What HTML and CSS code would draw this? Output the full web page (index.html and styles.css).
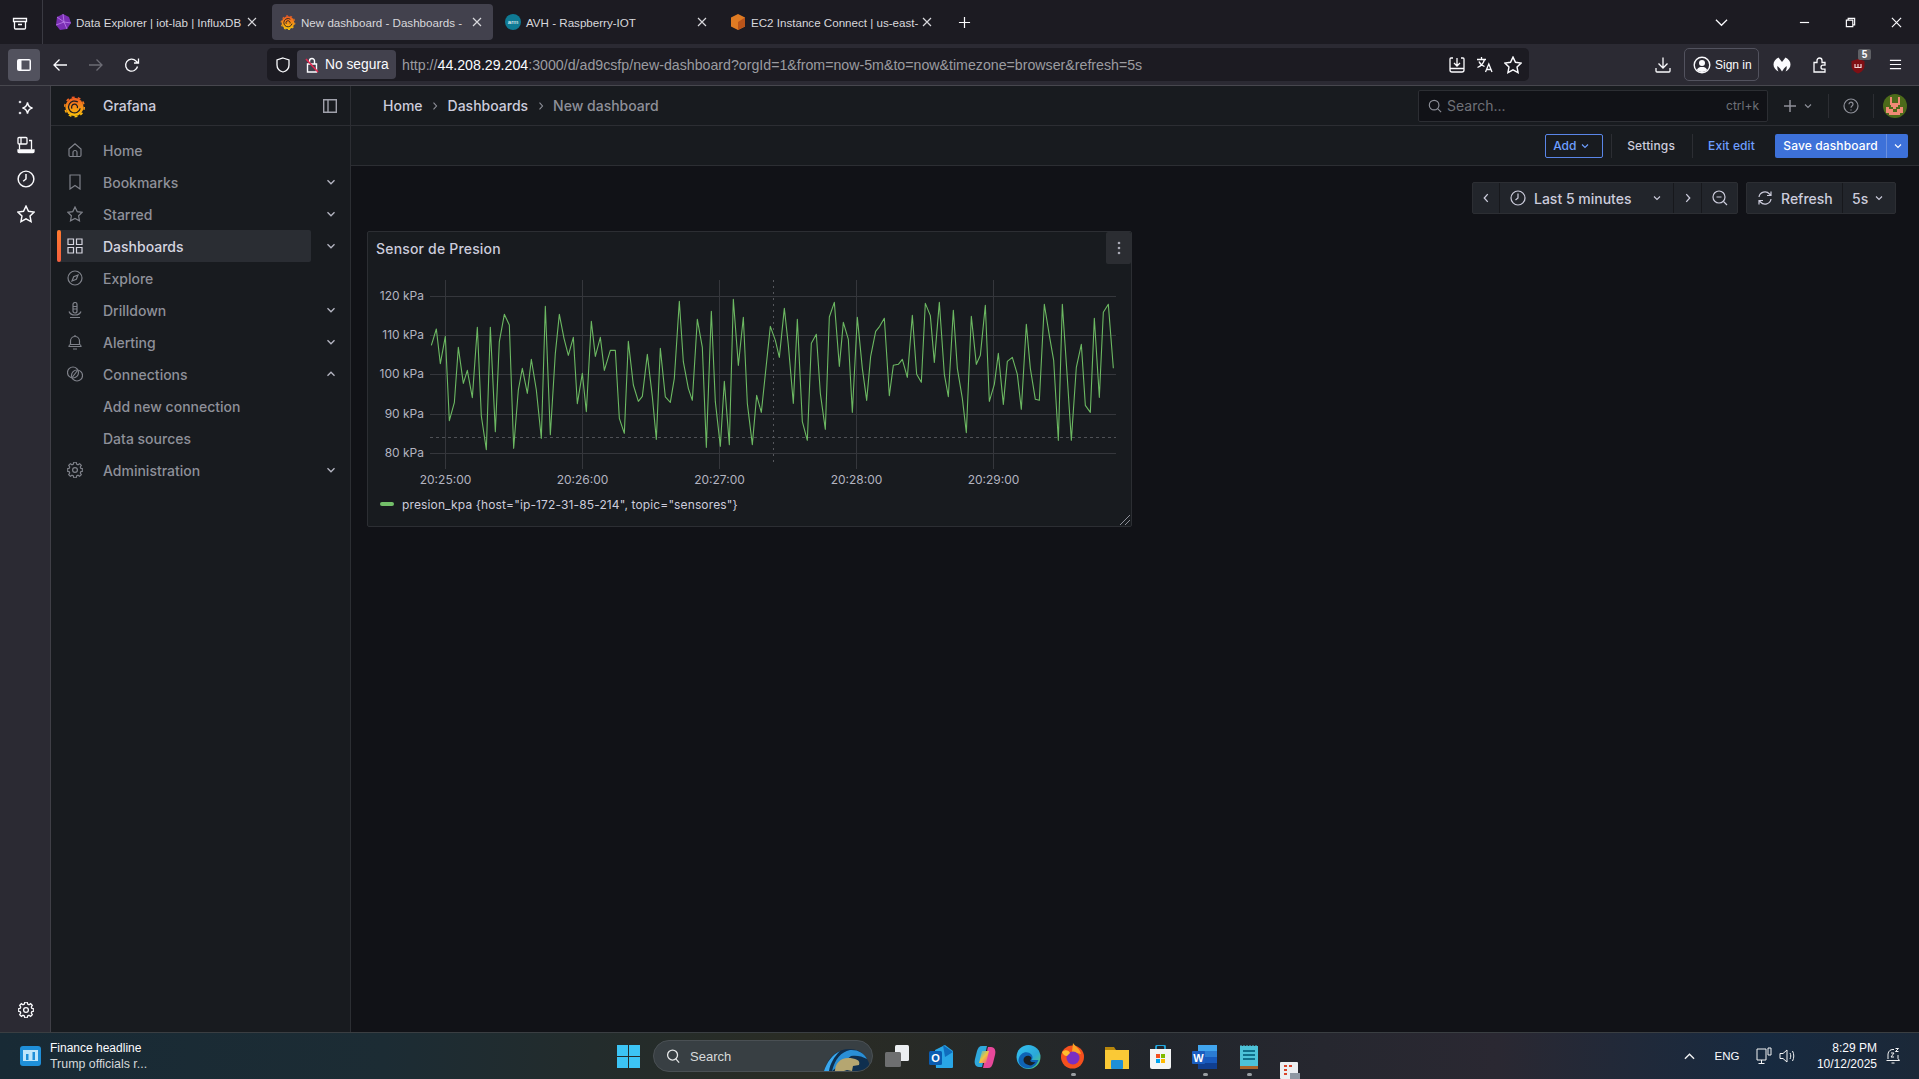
FILE: index.html
```html
<!DOCTYPE html>
<html lang="en">
<head>
  <meta charset="UTF-8" />
  <title>New dashboard - Dashboards - Grafana</title>
  <link rel="stylesheet" href="styles.css">
</head>
<body>
  <!-- shared icons -->
  <svg class="sprite" aria-hidden="true">
    <defs>
      <linearGradient id="gf" gradientUnits="userSpaceOnUse" x1="12" y1="1" x2="12" y2="24">
        <stop offset="0" stop-color="#ef4e26"/><stop offset="1" stop-color="#fbca0a"/>
      </linearGradient>
      <linearGradient id="edge" x1="0" y1="0" x2="1" y2="1">
        <stop offset="0" stop-color="#35c1f1"/><stop offset=".6" stop-color="#2aa8d8"/><stop offset="1" stop-color="#5fd05a"/>
      </linearGradient>
      <linearGradient id="copilot" x1="0" y1="0" x2="1" y2="1">
        <stop offset="0" stop-color="#2fb6e8"/><stop offset=".5" stop-color="#f2c53c"/><stop offset="1" stop-color="#e8489a"/>
      </linearGradient>
    </defs>
    <symbol id="logo" viewBox="0 0 24 24">
      <circle cx="12" cy="13" r="9.5" fill="url(#gf)"/>
      <circle cx="12" cy="13" r="10.2" fill="none" stroke="url(#gf)" stroke-width="1.6" stroke-dasharray="3 3.41"/>
      <path d="M18 14.5A6.2 6.2 0 1 1 15.5 7.9" fill="none" stroke="#1c1b22" stroke-width="1.3"/>
      <path d="M9.4 14.8a3.1 3.1 0 1 1 5.6-.6" fill="none" stroke="#1c1b22" stroke-width="1.3"/>
    </symbol>
    <symbol id="i-close" viewBox="0 0 10 10"><path d="M1 1l8 8M9 1l-8 8"/></symbol>
    <symbol id="i-down" viewBox="0 0 16 16"><path d="M4 6l4 4 4-4"/></symbol>
    <symbol id="i-up" viewBox="0 0 16 16"><path d="M4 10l4-4 4 4"/></symbol>
    <symbol id="i-left" viewBox="0 0 16 16"><path d="M10 3.5L6 8l4 4.5"/></symbol>
    <symbol id="i-right" viewBox="0 0 16 16"><path d="M6 3.5L10 8l-4 4.5"/></symbol>
    <symbol id="i-home" viewBox="0 0 16 16"><path d="M2 7l6-5.3L14 7v6.3a1.2 1.2 0 0 1-1.2 1.2H3.2A1.2 1.2 0 0 1 2 13.3zM6 14.5v-4a2 2 0 0 1 4 0v4"/></symbol>
    <symbol id="i-bookmark" viewBox="0 0 16 16"><path d="M3 1h10v14l-5-3.4L3 15z"/></symbol>
    <symbol id="i-star" viewBox="0 0 16 16"><path d="M8 1l2.2 4.6 5 .7-3.6 3.5.9 5L8 12.4l-4.5 2.4.9-5L.8 6.3l5-.7z"/></symbol>
    <symbol id="i-apps" viewBox="0 0 16 16"><path d="M1 1h5.5v5.500H1zM9.500 1H15v5.500H9.500zM1 9.500h5.500V15H1zM9.500 9.500H15V15H9.500z"/></symbol>
    <symbol id="i-compass" viewBox="0 0 16 16"><circle cx="8" cy="8" r="7"/><path d="M11 5L9.300 9.300 5 11l1.700-4.300z"/></symbol>
    <symbol id="i-drill" viewBox="0 0 16 16"><path d="M6 6V2.500a2 2 0 0 1 4 0V9a2 2 0 0 1-4 0zM6 4.500h4M6 7h4M2 9.500c1 2.500 3 3.500 6 3.500s5-1 6-3.500M3 15.500h10"/></symbol>
    <symbol id="i-bell" viewBox="0 0 16 16"><path d="M3.500 10.500V7a4.500 4.500 0 0 1 9 0v3.500M2 12.500c0-1.200.7-2 1.500-2h9c.8 0 1.500.8 1.500 2zM8 1v1.500M6 15h4"/></symbol>
    <symbol id="i-conn" viewBox="0 0 16 16"><circle cx="6" cy="6.500" r="5.500"/><circle cx="10" cy="9.500" r="5.500"/><path d="M5.500 11l5-6.500"/></symbol>
    <symbol id="i-cog" viewBox="0 1.300 16 16"><path d="M6.800 1.500h2.400l.4 1.900 1.400.6 1.600-1 1.700 1.700-1 1.600.6 1.400 1.900.4v2.400l-1.900.4-.6 1.400 1 1.600-1.700 1.700-1.600-1-1.400.6-.4 1.900H6.800l-.4-1.900-1.400-.6-1.600 1-1.700-1.700 1-1.600-.6-1.400-1.900-.4V8.100l1.900-.4.6-1.400-1-1.600 1.700-1.700 1.600 1 1.400-.6z"/><circle cx="8" cy="9.300" r="2.400"/></symbol>
    <symbol id="i-clock" viewBox="0 0 16 16"><circle cx="8" cy="8" r="7"/><path d="M8 3.500V8l-2.500 2"/></symbol>
  </svg>

  <!-- browser tab strip -->
  <div class="tabbar">
    <div class="tab-tools">
      <svg class="ico-16 stroke-light" viewBox="0 0 16 16"><path d="M1.500 3.500h13v3h-13zM2.500 6.500v6.500a1 1 0 0 0 1 1h9a1 1 0 0 0 1-1V6.500M6 9.500h4"/></svg>
    </div>
    <div class="tab">
      <svg class="ico-16" viewBox="0 0 16 16"><path d="M8 0l6 3 2 6-4 6-7 1-4-5 1-8z" fill="#7b2fb5"/><path d="M8 0l1 8 7 1M9 8l-8 3M9 8l3 7M2 3l7 5" stroke="#c58cf0" stroke-width=".7" fill="none"/></svg>
      <span class="tab-title">Data Explorer | iot-lab | InfluxDB</span>
      <svg class="tab-close"><use href="#i-close"/></svg>
    </div>
    <div class="tab tab-active">
      <svg class="ico-16"><use href="#logo"/></svg>
      <span class="tab-title">New dashboard - Dashboards -</span>
      <svg class="tab-close"><use href="#i-close"/></svg>
    </div>
    <div class="tab">
      <svg class="ico-16" viewBox="0 0 16 16"><circle cx="8" cy="8" r="8" fill="#0f7a94"/><text x="8" y="10" class="arm-text">arm</text></svg>
      <span class="tab-title">AVH - Raspberry-IOT</span>
      <svg class="tab-close"><use href="#i-close"/></svg>
    </div>
    <div class="tab">
      <svg class="ico-16" viewBox="0 0 16 16"><path d="M8 0l7 3.500v9L8 16l-7-3.500v-9z" fill="#e07b23"/><path d="M8 8l7-4.500v9L8 16z" fill="#b9541a"/></svg>
      <span class="tab-title">EC2 Instance Connect | us-east-</span>
      <svg class="tab-close"><use href="#i-close"/></svg>
    </div>
    <svg class="tab-new stroke-light" viewBox="0 0 14 14"><path d="M7 1v12M1 7h12"/></svg>
    <div class="win-controls">
      <svg class="win-list stroke-light" viewBox="0 0 14 14"><path d="M1 4l6 6 6-6"/></svg>
      <svg class="win-btn stroke-light" viewBox="0 0 12 12"><path d="M1 6h10"/></svg>
      <svg class="win-btn stroke-light" viewBox="0 0 12 12"><path d="M1.500 3.500h7v7h-7zM3.500 3.500V1.500h7v7h-2"/></svg>
      <svg class="win-btn stroke-light" viewBox="0 0 12 12"><path d="M1 1l10 10M11 1L1 11"/></svg>
    </div>
  </div>

  <!-- browser toolbar -->
  <div class="toolbar">
    <button class="tool-toggle"><svg class="ico-16" viewBox="0 0 16 16"><rect x="1" y="2" width="14" height="12" rx="2" fill="#fbfbfe"/><rect x="5.500" y="3.500" width="8" height="9" fill="#52525e"/></svg></button>
    <svg class="nav-btn stroke-light" viewBox="0 0 16 16"><path d="M15 8H2M7.500 2.500L2 8l5.500 5.500"/></svg>
    <svg class="nav-btn nav-off" viewBox="0 0 16 16"><path d="M1 8h13M8.500 2.500L14 8l-5.500 5.500"/></svg>
    <svg class="nav-btn stroke-light" viewBox="0 0 16 16"><path d="M13.500 9.500A6 6 0 1 1 12 4l2 2M14.500 1.500V6H10"/></svg>
    <div class="urlbar">
      <svg class="url-shield stroke-light" viewBox="0 0 16 16"><path d="M8 1l6 2v5c0 3.500-2.500 6-6 7-3.500-1-6-3.500-6-7V3z"/></svg>
      <div class="url-state">
        <svg class="ico-16" viewBox="0 0 16 16"><path d="M3.500 7h9v8h-9zM5.500 7V4a2.500 2.500 0 0 1 5 0v3" fill="none" stroke="#fbfbfe" stroke-width="1.400"/><path d="M2 2l12 13" stroke="#e22850" stroke-width="1.600"/></svg>
        <span>No segura</span>
      </div>
      <span class="url-text">http://<b>44.208.29.204</b>:3000/d/ad9csfp/new-dashboard?orgId=1&amp;from=now-5m&amp;to=now&amp;timezone=browser&amp;refresh=5s</span>
      <div class="url-actions">
        <svg class="ico-18 stroke-light" viewBox="0 0 18 18"><path d="M5 2H3a1 1 0 0 0-1 1v11a2 2 0 0 0 2 2h10a2 2 0 0 0 2-2V3a1 1 0 0 0-1-1h-2M2 12.500h14M9 2v7.500M6 7l3 3 3-3"/></svg>
        <svg class="ico-18 stroke-light" viewBox="0 0 18 18"><path d="M1 3.500h9M5.500 1v2.500M8.500 3.500c-1 4-3.500 6.500-7 8M3 5.500c1 2.500 3 4 5.500 5M9.500 16l3.300-8 3.200 8M10.700 13.500h4.600"/></svg>
        <svg class="ico-18 stroke-light" viewBox="0 0 16 16"><use href="#i-star"/></svg>
      </div>
    </div>
    <svg class="tool-down ico-18 stroke-light" viewBox="0 0 18 18"><path d="M9 1.500V12M4.500 7.500L9 12l4.500-4.500M2 12v3a1 1 0 0 0 1 1h12a1 1 0 0 0 1-1v-3"/></svg>
    <div class="signin">
      <svg class="ico-18" viewBox="0 0 18 18"><circle cx="9" cy="9" r="7.800" fill="none" stroke="#fbfbfe" stroke-width="1.400"/><circle cx="9" cy="7" r="3" fill="#fbfbfe"/><path d="M3.800 14c1-2.500 3-3 5.200-3s4.200.5 5.200 3c-1.500 1.300-3.200 2-5.200 2s-3.700-.7-5.200-2z" fill="#fbfbfe"/></svg>
      <span>Sign in</span>
    </div>
    <svg class="tool-mb" viewBox="0 0 18 18"><path d="M5.500 1.500C2.500 3 .5 5.500.5 8.500c0 3 2 5.500 5 7-1-1.500-1.500-3.500-1-5.500l2.500 2.500 2 3 2-3 2.500-2.500c.5 2 0 4-1 5.500 3-1.500 5-4 5-7 0-3-2-5.500-5-7L9 6z" fill="#fbfbfe"/></svg>
    <svg class="tool-ext ico-18 stroke-light" viewBox="0 0 18 18"><path d="M3 16V6.500h3V4.500a2.500 2.500 0 0 1 5 0v2h3v2.700h-2a2 2 0 0 0 0 4h2V16z"/></svg>
    <div class="tool-ublock">
      <svg class="ico-16" viewBox="0 0 16 16"><path d="M8 1l6.500 2v5c0 3.500-3 6-6.500 7.500C4.500 14 1.500 11.500 1.500 8V3z" fill="#7f0f14"/><path d="M5 6v3.500h6V6M8 6v3.500" fill="none" stroke="#f0d8d8" stroke-width="1.200"/></svg>
      <span class="ublock-badge">5</span>
    </div>
    <svg class="tool-menu stroke-light" viewBox="0 0 14 14"><path d="M1 2.500h12M1 7h12M1 11.500h12"/></svg>
  </div>

  <div class="main">
    <!-- browser side strip -->
    <div class="strip">
      <svg class="ico-18" viewBox="0 0 18 18"><path d="M10.500 3.500c.6 3.300 2.200 5 5 5.500-2.800.5-4.400 2.200-5 5.500-.6-3.300-2.200-5-5-5.500 2.800-.5 4.400-2.200 5-5.500z" fill="none" stroke="#fbfbfe" stroke-width="1.400"/><circle cx="3" cy="3" r="1.300" fill="#d8d8de"/><circle cx="3" cy="14" r="1.300" fill="#d8d8de"/></svg>
      <svg class="ico-18 stroke-light strip-second" viewBox="0 0 18 18"><path d="M2 1.500h7a1 1 0 0 1 1 1V7a1 1 0 0 1-1 1H2a1 1 0 0 1-1-1V2.500a1 1 0 0 1 1-1zM4 1.500V8M12 4.500h2.500v9M2.500 8v5.500"/><path d="M1 14h16v1.500a1 1 0 0 1-1 1H2a1 1 0 0 1-1-1z" fill="#fbfbfe"/></svg>
      <svg class="ico-18 stroke-light" viewBox="0 0 16 16"><use href="#i-clock"/></svg>
      <svg class="ico-18 stroke-light" viewBox="0 0 16 16"><use href="#i-star"/></svg>
      <svg class="ico-16 stroke-light strip-bottom" viewBox="0 0 16 16"><use href="#i-cog"/></svg>
    </div>

    <!-- grafana nav -->
    <aside class="gf-nav">
      <div class="gf-brand">
        <svg class="gf-logo"><use href="#logo"/></svg>
        <span>Grafana</span>
        <svg class="gf-dock" viewBox="0 0 14 14"><path d="M.7.700h12.600v12.600H.7zM5 .700v12.600"/></svg>
      </div>
      <ul class="gf-menu">
        <li class="gf-row"><a class="gf-link"><svg class="gf-ico"><use href="#i-home"/></svg>Home</a></li>
        <li class="gf-row"><a class="gf-link"><svg class="gf-ico"><use href="#i-bookmark"/></svg>Bookmarks</a><svg class="gf-caret"><use href="#i-down"/></svg></li>
        <li class="gf-row"><a class="gf-link"><svg class="gf-ico"><use href="#i-star"/></svg>Starred</a><svg class="gf-caret"><use href="#i-down"/></svg></li>
        <li class="gf-row"><a class="gf-link gf-active"><svg class="gf-ico"><use href="#i-apps"/></svg>Dashboards</a><svg class="gf-caret"><use href="#i-down"/></svg></li>
        <li class="gf-row"><a class="gf-link"><svg class="gf-ico"><use href="#i-compass"/></svg>Explore</a></li>
        <li class="gf-row"><a class="gf-link"><svg class="gf-ico"><use href="#i-drill"/></svg>Drilldown</a><svg class="gf-caret"><use href="#i-down"/></svg></li>
        <li class="gf-row"><a class="gf-link"><svg class="gf-ico"><use href="#i-bell"/></svg>Alerting</a><svg class="gf-caret"><use href="#i-down"/></svg></li>
        <li class="gf-row"><a class="gf-link"><svg class="gf-ico"><use href="#i-conn"/></svg>Connections</a><svg class="gf-caret"><use href="#i-up"/></svg></li>
        <li class="gf-row"><a class="gf-link gf-sub">Add new connection</a></li>
        <li class="gf-row"><a class="gf-link gf-sub">Data sources</a></li>
        <li class="gf-row"><a class="gf-link"><svg class="gf-ico"><use href="#i-cog"/></svg>Administration</a><svg class="gf-caret"><use href="#i-down"/></svg></li>
      </ul>
    </aside>

    <div class="content">
      <div class="topbar">
        <nav class="crumbs">
          <span>Home</span><svg class="crumb-sep"><use href="#i-right"/></svg>
          <span>Dashboards</span><svg class="crumb-sep"><use href="#i-right"/></svg>
          <span class="crumb-last">New dashboard</span>
        </nav>
        <div class="search">
          <svg class="search-ico" viewBox="0 0 16 16"><circle cx="7" cy="7" r="5.500"/><path d="M11 11l4 4"/></svg>
          <span class="search-text">Search...</span>
          <span class="search-key">ctrl+k</span>
        </div>
        <svg class="top-plus" viewBox="0 0 14 14"><path d="M7 1v12M1 7h12"/></svg>
        <svg class="top-caret"><use href="#i-down"/></svg>
        <span class="top-div top-div-a"></span>
        <svg class="top-help" viewBox="0 0 16 16"><circle cx="8" cy="8" r="7"/><path d="M6 6.200a2 2 0 1 1 3.200 1.600C8.400 8.400 8 8.800 8 9.800M8 11.500v1"/></svg>
        <span class="top-div top-div-b"></span>
        <svg class="avatar" viewBox="0 0 24 24" shape-rendering="crispEdges">
          <clipPath id="av"><circle cx="12" cy="12" r="12"/></clipPath>
          <g clip-path="url(#av)">
            <rect width="24" height="24" fill="#4c6a1a"/>
            <path d="M7 3h2v6h6V3h2v8h-2v2h-2v2h4v-2h3v6h-3v2H6v-2H3v-6h3v2h4v-2H8v-2H7z" fill="#f08a75"/>
            <path d="M10 15h4v3h-4z" fill="#4c6a1a"/>
          </g>
        </svg>
      </div>

      <div class="editbar">
        <button class="btn-add">Add<svg class="btn-caret"><use href="#i-down"/></svg></button>
        <span class="edit-div"></span>
        <span class="edit-link edit-settings">Settings</span>
        <span class="edit-div edit-div-b"></span>
        <span class="edit-link edit-exit">Exit edit</span>
        <button class="btn-save">Save dashboard</button>
        <button class="btn-save-more"><svg class="btn-caret"><use href="#i-down"/></svg></button>
      </div>

      <div class="dash">
        <div class="time-row">
          <div class="seg-group">
            <div class="seg seg-prev"><svg class="seg-ico"><use href="#i-left"/></svg></div>
            <div class="seg seg-range">
              <svg class="seg-clock"><use href="#i-clock"/></svg>
              <span>Last 5 minutes</span>
              <svg class="seg-caret"><use href="#i-down"/></svg>
            </div>
            <div class="seg seg-next"><svg class="seg-ico"><use href="#i-right"/></svg></div>
            <div class="seg seg-zoom"><svg class="seg-clock" viewBox="0 0 16 16"><circle cx="7" cy="7" r="6"/><path d="M4.500 7h5M11.500 11.500L15 15"/></svg></div>
          </div>
          <div class="seg-group">
            <div class="seg seg-refresh">
              <svg class="seg-clock" viewBox="0 0 16 16"><path d="M2 7a6 6 0 0 1 10.500-3L14 5.500M14 1.500v4h-4M14 9a6 6 0 0 1-10.500 3L2 10.500M2 14.500v-4h4"/></svg>
              <span>Refresh</span>
            </div>
            <div class="seg seg-int"><span>5s</span><svg class="seg-caret"><use href="#i-down"/></svg></div>
          </div>
        </div>

        <section class="panel">
          <header class="panel-head">
            <h2>Sensor de Presion</h2>
            <button class="panel-menu"><svg viewBox="0 0 4 14" class="panel-dots"><circle cx="2" cy="2" r="1.300"/><circle cx="2" cy="7" r="1.300"/><circle cx="2" cy="12" r="1.300"/></svg></button>
          </header>
          <svg class="chart" viewBox="0 0 765 224">
            <g class="grid">
              <path d="M63 30.500H749M63 69.500H749M63 108.500H749M63 148.500H749M63 187.500H749"/>
              <path d="M78.500 14V203M215.500 14V203M352.500 14V203M489.500 14V203M626.500 14V203"/>
            </g>
            <path class="thresh" d="M63 171.500H749"/>
            <path class="cursor" d="M406.500 14V199"/>
            <g class="axis-y">
              <text x="57" y="34">120 kPa</text>
              <text x="57" y="73">110 kPa</text>
              <text x="57" y="112">100 kPa</text>
              <text x="57" y="152">90 kPa</text>
              <text x="57" y="191">80 kPa</text>
            </g>
            <g class="axis-x">
              <text x="78.500" y="218">20:25:00</text>
              <text x="215.500" y="218">20:26:00</text>
              <text x="352.500" y="218">20:27:00</text>
              <text x="489.500" y="218">20:28:00</text>
              <text x="626.500" y="218">20:29:00</text>
            </g>
            <g transform="translate(-7 -41) scale(.33333)">
              <polyline class="series" points="214,361 229,312 241,416 256,334 268,587 283,533 295,367 310,475 322,436 337,518 352,307 364,573 379,674 391,307 406,620 418,350 433,268 448,300 461,670 475,495 487,430 502,505 514,403 529,495 544,640 556,244 571,629 586,385 598,268 612,340 625,391 640,337 652,536 667,445 679,560 694,289 706,394 721,337 733,436 751,376 766,376 778,580 793,625 805,349 820,480 835,529 847,514 862,388 877,515 889,643 901,370 916,516 931,532 943,460 958,229 970,410 985,490 997,526 1012,283 1027,367 1039,667 1054,259 1066,530 1081,664 1093,469 1108,659 1120,223 1135,421 1150,277 1162,535 1177,659 1190,511 1200,548"/>
            </g>
            <g transform="translate(393 -41) scale(.33333)">
              <polyline class="series" points="0,548 4,562 31,304 46,346 58,397 73,250 85,360 100,535 112,283 127,590 142,646 154,355 169,328 181,505 196,613 208,276 223,232 238,424 250,292 265,343 277,562 292,277 307,430 320,526 332,394 347,319 359,304 373,280 388,512 400,421 415,418 427,403 442,457 457,271 470,448 484,472 496,235 511,272 523,412 538,232 553,448 565,515 580,256 592,430 607,520 619,623 634,274 649,418 661,391 676,241 688,529 703,478 715,385 730,538 742,409 757,397 772,448 784,553 799,298 811,430 826,523 838,526 853,238 868,331 881,406 895,646 907,238 922,460 934,646 949,427 964,358 976,541 991,562 1003,280 1018,517 1030,262 1045,238 1060,430"/>
            </g>
          </svg>
          <div class="legend">
            <span class="legend-swatch"></span>
            <span>presion_kpa {host="ip-172-31-85-214", topic="sensores"}</span>
          </div>
          <svg class="panel-resize" viewBox="0 0 10 10"><path d="M0 10L10 0M5 10l5-5"/></svg>
        </section>
      </div>
    </div>
  </div>

  <!-- windows taskbar -->
  <footer class="taskbar">
    <div class="news">
      <svg class="news-ico" viewBox="0 0 21 21"><rect width="21" height="20" rx="3" fill="#1f8fd8"/><rect x="3" y="4" width="15" height="11" fill="#bfe6fb"/><path d="M6 8h2.500v6H6zM12.500 6H15v8h-2.500z" fill="#1f8fd8"/></svg>
      <div class="news-text">
        <span>Finance headline</span>
        <span class="news-sub">Trump officials r...</span>
      </div>
    </div>
    <svg class="win-logo" viewBox="0 0 23 23"><path d="M0 0h11v11H0zM12 0h11v11H12zM0 12h11v11H0zM12 12h11v11H12z" fill="#3cc4f5"/></svg>
    <div class="task-search">
      <svg class="task-search-ico" viewBox="0 0 16 16"><circle cx="7" cy="7" r="5.300"/><path d="M10.500 11l3.500 4"/></svg>
      <span>Search</span>
      <svg class="task-globe" viewBox="0 0 47 22"><path d="M0 22C4 7 14 0 26 0s19 9 21 22z" fill="#0f2f4f"/><path d="M8 22C11 10 17 3 26 1c8-.5 14 3 17 9-5-3-11-4-16-3z" fill="#2a8fd6"/><path d="M11 22c0-7 5-13 13-13 7 0 13 2 11 7l-6 1-1 5-5-1-3 1z" fill="#b5a671"/><path d="M0 22C3 13 8 6 16 2 10 8 6 15 5 22z" fill="#3aa8ee"/></svg>
    </div>
    <div class="task-apps">
      <svg class="task-app task-view" viewBox="0 0 24 22"><rect x="10" width="14" height="16" rx="1.500" fill="#eceff2"/><rect y="7" width="16" height="15" rx="1.500" fill="#6e6f70"/></svg>
      <svg class="task-app task-outlook" viewBox="0 0 24 24"><path d="M6 5l10-5 8 6v16a1 1 0 0 1-1 1H7z" fill="#29a6e6"/><path d="M14 0l10 7-8 5z" fill="#0f6cbd"/><rect y="6" width="13" height="14" rx="1.500" fill="#0a5cb0"/><text x="6.500" y="17" class="app-letter">O</text></svg>
      <svg class="task-app task-copilot" viewBox="0 0 22 24"><path d="M8 1c-3 0-4 2-5 5L1 14c-1 4 0 8 4 8h3l5-21z" fill="#2fa8dc"/><path d="M14 23c3 0 4-2 5-5l2-8c1-4 0-8-4-8h-3L9 23z" fill="#e8489a"/><path d="M8 6h7l-3 12H5z" fill="url(#copilot)"/></svg>
      <svg class="task-app task-edge" viewBox="0 0 24 24"><circle cx="12" cy="12" r="12" fill="url(#edge)"/><path d="M2 15C3 8 9 6 13 8c3 1.500 4 5 2 7h7c-2 6-7 9-12 8-5-.5-8-4-8-8z" fill="#0f63b5"/><path d="M7 15c0-3 3-5 6-4 2 .6 2.500 3 1 4-1 1 1 3 5 2-2 3-5 4-7 3-3-.5-5-2.500-5-5z" fill="#1b1f24"/></svg>
      <svg class="task-app task-fox" viewBox="0 0 23 26"><circle cx="11.500" cy="14" r="11.500" fill="#f5501e"/><path d="M12 0c2 3 7 6 8 11l-9-2z" fill="#fca326"/><circle cx="12" cy="15" r="6.500" fill="#7a2fc2"/><path d="M1 9c3-3 7-2 8 1l-3 3c-3 0-4-2-5-4z" fill="#ffbd2e"/></svg>
      <svg class="task-app task-folder" viewBox="0 0 24 23"><path d="M0 1h9l2 3H0z" fill="#b8860b"/><path d="M0 4h24v19H0z" fill="#fac936"/><rect x="6" y="14" width="12" height="9" rx="1" fill="#1f8fd8"/></svg>
      <svg class="task-app task-store" viewBox="0 0 23 24"><path d="M7 5V2a2 2 0 0 1 2-2h5a2 2 0 0 1 2 2v3" fill="none" stroke="#22a6dc" stroke-width="1.800"/><path d="M1 4h21v18a2 2 0 0 1-2 2H3a2 2 0 0 1-2-2z" fill="#f3f4f5"/><path d="M7 9h4v4H7z" fill="#f25022"/><path d="M12 9h4v4h-4z" fill="#7fba00"/><path d="M7 14h4v4H7z" fill="#00a4ef"/><path d="M12 14h4v4h-4z" fill="#ffb900"/></svg>
      <svg class="task-app task-word" viewBox="0 0 25 24"><rect x="6" width="19" height="6" fill="#41a5ee"/><rect x="6" y="6" width="19" height="6" fill="#2b7cd3"/><rect x="6" y="12" width="19" height="6" fill="#185abd"/><rect x="6" y="18" width="19" height="6" fill="#103f91"/><rect y="6" width="13" height="13" rx="1" fill="#1a5dc0"/><text x="6.500" y="16.500" class="app-letter">W</text></svg>
      <svg class="task-app task-note" viewBox="0 0 18 24"><rect y="1" width="18" height="22" fill="#4cc2d8"/><rect y="21" width="18" height="3" fill="#a9652b"/><path d="M1 0v2M4 0v2M7 0v2M10 0v2M13 0v2M16 0v2" stroke="#4cc2d8"/><path d="M3 6h12M3 10h12M3 14h12" stroke="#0f6f8a" stroke-width="2"/></svg>
      <i class="task-dot dot-fox"></i>
      <i class="task-dot dot-word"></i>
      <i class="task-dot dot-note"></i>
      <svg class="task-clip" viewBox="0 0 20 17"><rect width="18" height="17" rx="1" fill="#eceff2"/><path d="M4 3h3v2H4zM9 3h3v2H9zM4 7h3v2H4zM4 11h3v2H4z" fill="#d9442a"/><rect x="10" y="11" width="10" height="6" fill="#8e98a3"/></svg>
    </div>
    <div class="tray">
      <svg class="tray-up" viewBox="0 0 12 8"><path d="M1 7l5-5 5 5"/></svg>
      <span class="tray-lang">ENG</span>
      <svg class="tray-net" viewBox="0 0 16 18"><path d="M1 2h9v11H1zM5.500 13v3M2.500 16.500h6M12 1h3v7h-3z"/></svg>
      <svg class="tray-vol" viewBox="0 0 16 18"><path d="M1 6.500h3L8 3v12l-4-3.500H1zM11 6c1 2 1 4 0 6M13.500 4c1.700 3 1.700 7 0 10"/></svg>
      <div class="tray-clock"><span>8:29 PM</span><span>10/12/2025</span></div>
      <svg class="tray-bell" viewBox="0 0 16 18"><path d="M3 12V7a5 5 0 0 1 6-4.500M1.500 13.500h13L13 11.500V8M6.500 16h3M6 6h3L6 10h3M10.500 1.500h3l-3 3h3"/></svg>
    </div>
  </footer>
</body>
</html>
```
FILE: styles.css
```css
* {
  box-sizing: border-box;
}
html, body {
  margin: 0;
  height: 100%;
}
body {
  width: 1919px;
  height: 1079px;
  overflow: hidden;
  display: flex;
  flex-direction: column;
  font-family: "Liberation Sans", Arial, sans-serif;
  background-color: #111217;
  color: #fbfbfe;
}
.sprite {
  position: absolute;
  width: 0;
  height: 0;
}
svg {
  display: block;
  flex: none;
}
button {
  font-family: inherit;
  border: 0;
  padding: 0;
}
ul {
  margin: 0;
  padding: 0;
  list-style: none;
}
.ico-16 {
  width: 16px;
  height: 16px;
}
.ico-18 {
  width: 18px;
  height: 18px;
}
.stroke-light {
  fill: none;
  stroke: #fbfbfe;
  stroke-width: 1.3;
}

/* browser tabs */
.tabbar {
  height: 44px;
  flex: none;
  display: flex;
  align-items: center;
  background-color: #1c1b22;
}
.tab-tools {
  width: 43px;
  height: 44px;
  padding: 15px 0 0 12px;
  border-right: 1px solid #3a3a42;
  margin-right: 4px;
}
.tab {
  width: 221px;
  height: 36px;
  margin-right: 4px;
  padding-left: 8px;
  display: flex;
  align-items: center;
  gap: 6px;
  border-radius: 4px;
  font-size: 11.6px;
  color: #d8d8dc;
}
.tab-active {
  background-color: #42414d;
}
.tab-title {
  width: 168px;
  margin-left: -1px;
  margin-right: 1px;
  padding-top: 1px;
  white-space: nowrap;
}
.tab-close {
  width: 10px;
  height: 10px;
  margin-left: -4px;
  fill: none;
  stroke: #d8d8dc;
  stroke-width: 1.2;
}
.arm-text {
  font-size: 6px;
  fill: #fff;
  text-anchor: middle;
}
.tab-new {
  width: 13px;
  height: 13px;
  margin-left: 11px;
}
.win-controls {
  margin-left: auto;
  display: flex;
  align-items: center;
}
.win-list {
  width: 13px;
  height: 13px;
  margin-right: 71px;
}
.win-btn {
  width: 11px;
  height: 11px;
  margin-right: 35px;
}
.win-btn:last-child {
  margin-right: 17px;
}

/* browser toolbar */
.toolbar {
  height: 42px;
  flex: none;
  display: flex;
  align-items: center;
  background-color: #2b2a33;
  border-bottom: 1px solid #47474e;
}
.tool-toggle {
  width: 32px;
  height: 32px;
  margin-left: 8px;
  display: flex;
  align-items: center;
  justify-content: center;
  border-radius: 4px;
  background-color: #52525e;
}
.nav-btn {
  width: 16px;
  height: 16px;
  margin-left: 20px;
}
.tool-toggle + .nav-btn {
  margin-left: 12px;
}
.nav-off {
  fill: none;
  stroke: #6c6c74;
  stroke-width: 1.3;
}
.urlbar {
  width: 1262px;
  height: 33px;
  margin-left: 127px;
  display: flex;
  align-items: center;
  border-radius: 5px;
  background-color: #1c1b22;
}
.url-shield {
  width: 16px;
  height: 16px;
  margin-left: 8px;
}
.url-state {
  width: 99px;
  height: 29px;
  margin-left: 6px;
  display: flex;
  align-items: center;
  gap: 5px;
  padding-left: 7px;
  border-radius: 4px;
  background-color: #42414d;
  font-size: 13.8px;
}
.url-text {
  margin-left: 6px;
  font-size: 14.2px;
  color: #9b9ba0;
  white-space: nowrap;
}
.url-text b {
  font-weight: 400;
  color: #fbfbfe;
}
.url-actions {
  margin-left: auto;
  margin-right: 7px;
  display: flex;
  gap: 10px;
}
.tool-down {
  margin-left: 125px;
}
.signin {
  width: 75px;
  height: 33px;
  margin-left: 12px;
  padding-left: 8px;
  display: flex;
  align-items: center;
  gap: 4px;
  border: 1px solid #52525e;
  border-radius: 5px;
  font-size: 12px;
}
.tool-mb {
  width: 18px;
  height: 18px;
  margin-left: 14px;
}
.tool-ext {
  margin-left: 20px;
}
.tool-ublock {
  position: relative;
  margin-left: 21px;
  padding-top: 2px;
}
.ublock-badge {
  position: absolute;
  top: -7px;
  left: 8px;
  width: 13px;
  height: 11px;
  border-radius: 2px;
  background-color: #5f6065;
  font-size: 10px;
  line-height: 11px;
  font-weight: 700;
  text-align: center;
}
.tool-menu {
  width: 13px;
  height: 13px;
  margin-left: 23px;
}

/* browser side strip */
.main {
  flex: 1;
  min-height: 0;
  display: flex;
}
.strip {
  width: 51px;
  flex: none;
  display: flex;
  flex-direction: column;
  align-items: center;
  gap: 17px;
  padding: 13px 0 0 2px;
  background-color: #2b2a33;
  border-right: 1px solid #3f3f46;
}
.strip-second {
  margin: 2px 0 -1px;
}
.strip-bottom {
  margin-top: auto;
  margin-bottom: 14px;
}

/* grafana side nav */
.gf-nav {
  width: 300px;
  flex: none;
  background-color: #181b1f;
  border-right: 1px solid #2c2e33;
  font-family: Inter, "Liberation Sans", sans-serif;
  font-size: 14px;
}
.gf-brand {
  height: 40px;
  padding-left: 12px;
  display: flex;
  align-items: center;
  border-bottom: 1px solid #2c2e33;
  font-weight: 500;
  color: #ccccdc;
}
.gf-logo {
  width: 23px;
  height: 24px;
  margin-right: 17px;
}
.gf-dock {
  width: 14px;
  height: 14px;
  margin-left: auto;
  margin-right: 13px;
  fill: none;
  stroke: #a0a1ab;
  stroke-width: 1.4;
}
.gf-menu {
  padding-top: 8px;
}
.gf-row {
  height: 32px;
  padding-left: 6px;
  display: flex;
  align-items: center;
}
.gf-link {
  position: relative;
  width: 254px;
  height: 32px;
  padding-left: 10px;
  display: flex;
  align-items: center;
  gap: 20px;
  border-radius: 2px;
  color: #8e9099;
  font-weight: 500;
}
.gf-sub {
  padding-left: 46px;
}
.gf-active {
  background-color: #2a2d33;
  color: #d5d5e0;
}
.gf-active::before {
  content: "";
  position: absolute;
  left: 0;
  top: 0;
  width: 4px;
  height: 32px;
  border-radius: 2px;
  background: linear-gradient(#ff7a2e, #f55f3e);
}
.gf-ico {
  width: 16px;
  height: 16px;
  fill: none;
  stroke: #7f828a;
  stroke-width: 1.2;
}
.gf-active .gf-ico {
  stroke: #d5d5e0;
}
.gf-caret {
  width: 14px;
  height: 14px;
  margin-left: 13px;
  fill: none;
  stroke: #b5b6c2;
  stroke-width: 1.5;
}

/* grafana main area */
.content {
  flex: 1;
  min-width: 0;
  display: flex;
  flex-direction: column;
  font-family: Inter, "Liberation Sans", sans-serif;
}
.topbar {
  height: 40px;
  flex: none;
  padding: 0 12px 0 32px;
  display: flex;
  align-items: center;
  background-color: #181b1f;
  border-bottom: 1px solid #2c2e33;
}
.crumbs {
  display: flex;
  align-items: center;
  font-size: 14px;
  font-weight: 500;
  color: #ccccdc;
}
.crumb-sep {
  width: 12px;
  height: 12px;
  margin: 0 6.5px;
  fill: none;
  stroke: #8e9099;
  stroke-width: 1.5;
}
.crumb-last {
  color: #8e9099;
}
.search {
  width: 350px;
  height: 32px;
  margin-left: auto;
  padding: 0 8px 0 9px;
  display: flex;
  align-items: center;
  background-color: #111217;
  border: 1px solid #2c2e33;
  border-radius: 2px;
}
.search-ico {
  width: 14px;
  height: 14px;
  fill: none;
  stroke: #8e9099;
  stroke-width: 1.3;
}
.search-text {
  margin-left: 5px;
  font-size: 14px;
  color: #6f7178;
}
.search-key {
  margin-left: auto;
  font-size: 12px;
  color: #6f7178;
}
.top-plus {
  width: 14px;
  height: 14px;
  margin-left: 15px;
  fill: none;
  stroke: #8e9099;
  stroke-width: 1.5;
}
.top-caret {
  width: 12px;
  height: 12px;
  margin-left: 5px;
  fill: none;
  stroke: #8e9099;
  stroke-width: 1.5;
}
.top-div {
  width: 1px;
  height: 24px;
  background-color: #2c2e33;
}
.top-div-a {
  margin-left: 14px;
}
.top-help {
  width: 16px;
  height: 16px;
  margin-left: 14px;
  fill: none;
  stroke: #8e9099;
  stroke-width: 1.2;
}
.top-div-b {
  margin-left: 14px;
}
.avatar {
  width: 24px;
  height: 24px;
  margin-left: 9px;
}
.editbar {
  height: 40px;
  flex: none;
  padding-right: 11px;
  display: flex;
  align-items: center;
  justify-content: flex-end;
  background-color: #181b1f;
  border-bottom: 1px solid #2c2e33;
  font-size: 12px;
  font-weight: 500;
  letter-spacing: .13px;
}
.btn-add {
  width: 58px;
  height: 24px;
  padding-left: 7px;
  display: flex;
  align-items: center;
  gap: 3px;
  background: none;
  border: 1px solid #5a86e8;
  border-radius: 2px;
  color: #6e9fff;
  font-size: 12px;
  font-weight: 500;
}
.btn-caret {
  width: 12px;
  height: 12px;
  fill: none;
  stroke: currentColor;
  stroke-width: 1.5;
}
.edit-div {
  width: 1px;
  height: 24px;
  margin-left: 8px;
  background-color: #2c2e33;
}
.edit-link {
  margin-left: 15px;
}
.edit-settings {
  color: #ccccdc;
}
.edit-div-b {
  margin-left: 17px;
}
.edit-exit {
  color: #6e9fff;
}
.btn-save {
  width: 112px;
  height: 24px;
  margin-left: 20px;
  background-color: #3d71d9;
  border-radius: 2px 0 0 2px;
  border-right: 1px solid #6a90e0;
  color: #fff;
  font-size: 12px;
  font-weight: 500;
  letter-spacing: .13px;
}
.btn-save-more {
  width: 21px;
  height: 24px;
  display: flex;
  align-items: center;
  justify-content: center;
  background-color: #3d71d9;
  border-radius: 0 2px 2px 0;
  color: #fff;
}
.dash {
  flex: 1;
  background-color: #111217;
}
.time-row {
  padding: 16px 23px 0 0;
  display: flex;
  justify-content: flex-end;
  gap: 8px;
}
.seg-group {
  height: 32px;
  display: flex;
  border: 1px solid #2c2e33;
  border-radius: 2px;
  background-color: #22252b;
  font-size: 14px;
  font-weight: 500;
  color: #ccccdc;
}
.seg {
  display: flex;
  align-items: center;
  border-left: 1px solid #17181c;
}
.seg:first-child {
  border-left: 0;
}
.seg-prev {
  width: 26px;
  justify-content: center;
}
.seg-next {
  width: 28px;
  justify-content: center;
}
.seg-zoom {
  width: 36px;
  justify-content: center;
}
.seg-range {
  width: 174px;
  padding-left: 10px;
}
.seg-refresh {
  width: 95px;
  padding-left: 10px;
}
.seg-int {
  width: 53px;
  padding-left: 9px;
}
.seg-ico {
  width: 14px;
  height: 14px;
  fill: none;
  stroke: #ccccdc;
  stroke-width: 1.5;
}
.seg-clock {
  width: 16px;
  height: 16px;
  margin-right: 8px;
  fill: none;
  stroke: #ccccdc;
  stroke-width: 1.2;
}
.seg-zoom .seg-clock {
  margin-right: 0;
}
.seg-caret {
  width: 12px;
  height: 12px;
  margin-left: auto;
  margin-right: 10px;
  fill: none;
  stroke: #ccccdc;
  stroke-width: 1.5;
}

/* panel */
.panel {
  position: relative;
  width: 765px;
  height: 296px;
  margin: 17px 0 0 16px;
  background-color: #181b1f;
  border: 1px solid #2c2e33;
  border-radius: 2px;
}
.panel-head {
  height: 34px;
  padding-left: 8px;
  display: flex;
  align-items: flex-start;
  justify-content: space-between;
}
.panel-head h2 {
  margin: 0;
  padding-top: 8px;
  font-size: 14px;
  font-weight: 500;
  letter-spacing: .18px;
  color: #ccccdc;
}
.panel-menu {
  width: 25px;
  height: 32px;
  display: flex;
  align-items: center;
  justify-content: center;
  background-color: #2b2d32;
  border-radius: 2px;
}
.panel-dots {
  width: 4px;
  height: 14px;
  fill: #a8a9b4;
}
.chart {
  width: 765px;
  height: 224px;
  margin-left: -1px;
}
.grid path {
  fill: none;
  stroke: #35373c;
}
.thresh {
  fill: none;
  stroke: #4f5156;
  stroke-dasharray: 3 3;
}
.cursor {
  fill: none;
  stroke: #55575c;
  stroke-dasharray: 2 4;
}
.axis-y text,
.axis-x text {
  font-size: 12px;
  fill: #b3b4c0;
}
.axis-y text {
  text-anchor: end;
}
.axis-x text {
  text-anchor: middle;
}
.series {
  fill: none;
  stroke: #6cb862;
  stroke-width: 3.3;
  stroke-linejoin: round;
}
.legend {
  height: 28px;
  padding-left: 12px;
  display: flex;
  align-items: center;
  gap: 8px;
  font-size: 12px;
  letter-spacing: .13px;
  color: #ccccdc;
}
.legend-swatch {
  width: 14px;
  height: 4px;
  border-radius: 2px;
  background-color: #73bf69;
}
.panel-resize {
  position: absolute;
  right: 1px;
  bottom: 1px;
  width: 10px;
  height: 10px;
  fill: none;
  stroke: #8e9099;
}

/* taskbar */
.taskbar {
  height: 47px;
  flex: none;
  display: flex;
  align-items: center;
  position: relative;
  border-top: 1px solid #3a3e42;
  background: linear-gradient(90deg, #182a35 0%, #1c2c34 20%, #2a2c24 42%, #22262c 60%, #2a2832 78%, #172a40 92%, #1b2838 100%);
  font-size: 12px;
}
.news {
  width: 600px;
  padding-left: 20px;
  display: flex;
  align-items: center;
  gap: 9px;
}
.news-ico {
  width: 21px;
  height: 21px;
}
.news-text {
  display: flex;
  flex-direction: column;
  gap: 2px;
  line-height: 14px;
  font-size: 12px;
}
.news-sub {
  color: #d5d8da;
  font-size: 12.4px;
}
.win-logo {
  width: 23px;
  height: 23px;
  margin-left: 17px;
}
.task-search {
  width: 220px;
  height: 32px;
  margin-left: 13px;
  padding-left: 12px;
  display: flex;
  align-items: center;
  position: relative;
  overflow: hidden;
  border: 1px solid #4a5054;
  border-radius: 16px;
  background-color: #383f43;
  color: #d7dadb;
  font-size: 13px;
}
.task-search-ico {
  width: 15px;
  height: 16px;
  margin-right: 9px;
  fill: none;
  stroke: #e5e7e8;
  stroke-width: 1.4;
}
.task-globe {
  position: absolute;
  right: 1px;
  bottom: 0;
  width: 47px;
  height: 22px;
}
.task-apps {
  position: relative;
  height: 46px;
  width: 420px;
}
/* pinned icons keep their own slot along the bar */
.task-app,
.task-dot,
.task-clip {
  position: absolute;
}
.task-app {
  top: 12px;
  height: 24px;
}
.task-view { left: 12px; width: 24px; height: 22px; }
.task-outlook { left: 56px; width: 24px; }
.task-copilot { left: 101px; width: 22px; }
.task-edge { left: 143px; width: 25px; }
.task-fox { left: 188px; width: 23px; height: 26px; top: 10px; }
.task-folder { left: 232px; width: 24px; height: 23px; top: 13px; }
.task-store { left: 276px; width: 23px; }
.task-word { left: 319px; width: 25px; }
.task-note { left: 367px; width: 18px; }
.task-clip {
  left: 407px;
  bottom: 0;
  width: 20px;
  height: 17px;
}
.task-dot {
  top: 40px;
  width: 5px;
  height: 3px;
  border-radius: 2px;
  background-color: #9a9ea2;
}
.dot-fox { left: 198px; }
.dot-word { left: 330px; }
.dot-note { left: 374px; }
.app-letter {
  font-size: 11px;
  font-weight: 700;
  fill: #fff;
  text-anchor: middle;
}
.tray {
  margin-left: auto;
  display: flex;
  align-items: center;
}
.tray svg {
  fill: none;
  stroke: #f2f3f4;
  stroke-width: 1;
}
.tray .tray-up {
  width: 11px;
  height: 8px;
  stroke-width: 1.5;
}
.tray-lang {
  margin-left: 20px;
  font-size: 11.5px;
}
.tray-net {
  width: 16px;
  height: 18px;
  margin-left: 16.5px;
}
.tray-vol {
  width: 16px;
  height: 18px;
  margin-left: 7px;
}
.tray-clock {
  width: 62px;
  margin-left: 20px;
  display: flex;
  flex-direction: column;
  align-items: flex-end;
  gap: 3px;
  line-height: 13px;
  font-size: 12px;
}
.tray-bell {
  width: 16px;
  height: 18px;
  margin: 0 18px 0 8px;
}
```
